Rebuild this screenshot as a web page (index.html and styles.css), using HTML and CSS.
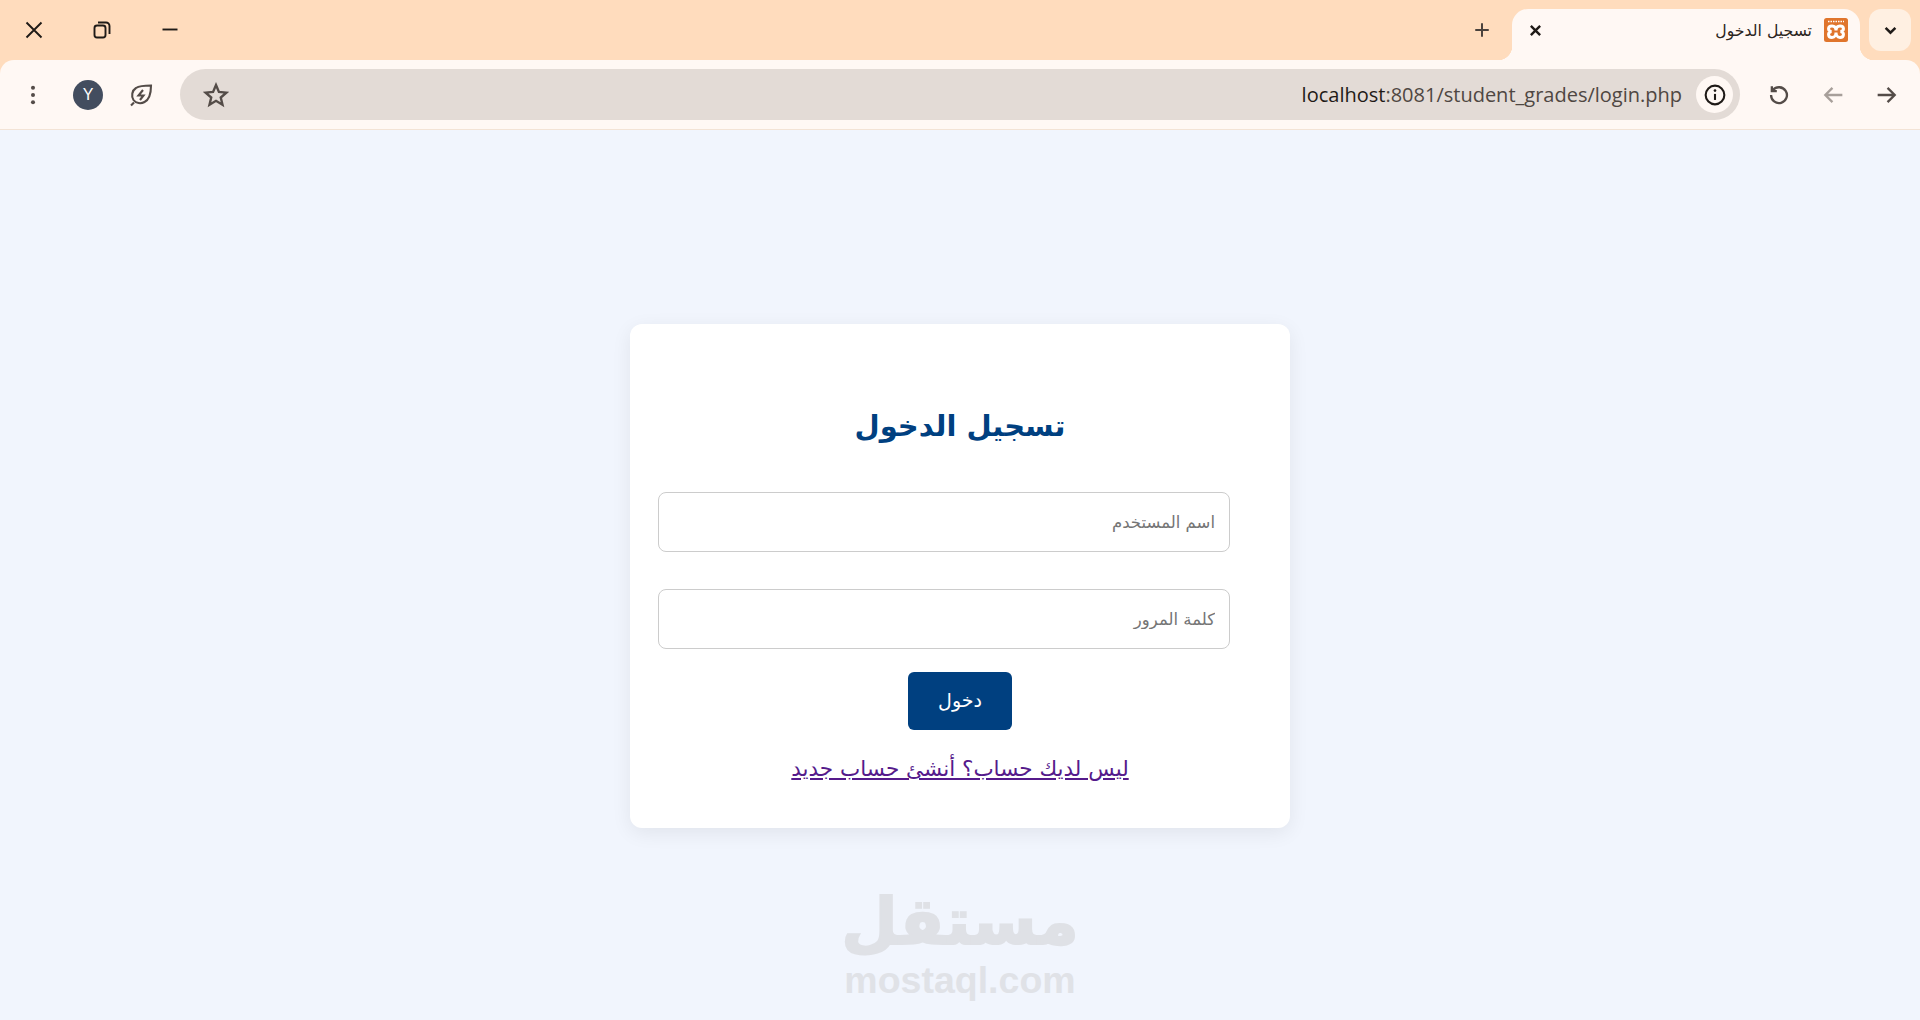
FILE: index.html
```html
<!DOCTYPE html>
<html lang="ar">
<head>
    <meta charset="UTF-8">
    <title>تسجيل الدخول</title>
    <link rel="stylesheet" href="styles.css">
</head>
<body>
    <header class="browser">
        <div class="tabstrip">
            <div class="window-btns">
                <svg class="win-icon" viewBox="0 0 20 20"><path d="M2.500 2.500l15 15M17.500 2.500l-15 15"/></svg>
                <svg class="win-icon" viewBox="0 0 20 20"><rect x="2.500" y="5.500" width="11" height="12" rx="2.500"/><path d="M6 2.500h8a3.500 3.500 0 0 1 3.500 3.500v8"/></svg>
                <svg class="win-icon" viewBox="0 0 20 20"><path d="M2.500 9.500h15"/></svg>
            </div>
            <svg class="new-tab" viewBox="0 0 20 20"><path d="M10 2.500v15M2.500 10h15"/></svg>
            <div class="tab">
                <svg class="tab-close" viewBox="0 0 14 14"><path d="M2 2l10 10M12 2L2 12"/></svg>
                <span class="tab-title">تسجيل الدخول</span>
                <svg class="favicon" viewBox="0 0 24 24">
                    <rect width="24" height="24" rx="2.500" fill="#e0752c"/>
                    <path d="M4 3.500h16" fill="none" stroke="#fff" stroke-width="1.500" stroke-dasharray="1.500 1"/>
                    <path d="M8 8c-4.500 0-4.500 5-.5 5.500c-4 .5-4 6 .5 6c3 0 4-3 4-5c0 2 1 5 4 5c4.500 0 4.500-5.500 .5-6c4-.5 4-5.500-.5-5.500c-3 0-4 2-4 4.500c0-2.500-1-4.500-4-4.500z" fill="none" stroke="#fff" stroke-width="3"/>
                </svg>
            </div>
            <div class="tab-search">
                <svg viewBox="0 0 12 12"><path d="M1.500 3.500L6 8l4.500-4.500"/></svg>
            </div>
        </div>
        <div class="toolbar">
            <svg class="menu-dots" viewBox="0 0 6 24"><circle cx="3" cy="4" r="2.200"/><circle cx="3" cy="12" r="2.200"/><circle cx="3" cy="20" r="2.200"/></svg>
            <div class="avatar">Y</div>
            <svg class="leaf" viewBox="0 0 24 24"><path d="M22 2.500c-7.500 0-12 .5-15 2.500C3 7.500 2 13 4.500 17c2.500 3.500 7.500 4 11 2C20.500 16.500 22 10.500 22 2.500z"/><path d="M2 22.500l3-3"/><path d="M14 7l-4.500 5.500h5L11 17"/></svg>
            <div class="omnibox">
                <svg class="star" viewBox="0 0 24 24"><path d="M12 2.800l2.700 6.400 6.900.6-5.200 4.500 1.600 6.700L12 17.400 6 21l1.600-6.700-5.200-4.500 6.900-.6z"/></svg>
                <div class="url"><span class="host">localhost</span>:8081/student_grades/login.php</div>
                <div class="site-info">
                    <svg viewBox="0 0 20 20"><circle cx="10" cy="10" r="8.500"/><path d="M10 9v5.500"/><circle class="dot" cx="10" cy="6" r="1.200"/></svg>
                </div>
            </div>
            <div class="nav-btns">
                <svg class="nav-icon" viewBox="0 0 20 20"><path d="M4.500 5.500A7.200 7.200 0 1 1 2.800 10"/><path d="M3.500 2v4.500H8"/></svg>
                <svg class="nav-icon faded" viewBox="0 0 20 20"><path d="M18.500 10H2.500M9.500 3.500L3 10l6.500 6.500"/></svg>
                <svg class="nav-icon" viewBox="0 0 20 20"><path d="M1.500 10h16M10.500 3.500L17 10l-6.500 6.500"/></svg>
            </div>
        </div>
    </header>

    <main class="page">
        <section class="login-card">
            <h2 class="login-title">تسجيل الدخول</h2>
            <form class="login-form">
                <input class="field" type="text" dir="rtl" placeholder="اسم المستخدم">
                <input class="field" type="password" dir="rtl" placeholder="كلمة المرور">
                <button class="submit" type="button">دخول</button>
            </form>
            <a class="register-link" href="#">ليس لديك حساب؟ أنشئ حساب جديد</a>
        </section>
        <div class="watermark">
            <div class="wm-arabic">مستقل</div>
            <div class="wm-latin">mostaql.com</div>
        </div>
    </main>
</body>
</html>
```

FILE: styles.css
```css
* {
    box-sizing: border-box;
}

html, body {
    height: 100%;
}

body {
    margin: 0;
    display: flex;
    flex-direction: column;
    font-family: "DejaVu Sans", sans-serif;
    background-color: #f1f5fd;
    overflow: hidden;
}

.browser {
    flex: none;
    background-color: #ffdcbd;
}

.tabstrip {
    height: 60px;
    display: flex;
    align-items: flex-end;
    padding-left: 24px;
}

.window-btns {
    display: flex;
    gap: 48px;
    height: 60px;
    align-items: center;
    margin-right: auto;
}

.win-icon {
    width: 20px;
    height: 20px;
    fill: none;
    stroke: #1f1a17;
    stroke-width: 1.900;
}

.new-tab {
    width: 18px;
    height: 18px;
    margin: 0 21px 21px 0;
    fill: none;
    stroke: #4a423d;
    stroke-width: 2.200;
}

.tab {
    position: relative;
    width: 348px;
    height: 51px;
    display: flex;
    align-items: center;
    background-color: #fff8f4;
    border-radius: 16px 16px 0 0;
    padding: 0 12px 9px 17px;
}

/* curved feet of the active tab */
.tab::before,
.tab::after {
    content: "";
    position: absolute;
    bottom: 0;
    width: 14px;
    height: 14px;
}

.tab::before {
    left: -14px;
    background: radial-gradient(circle at 0 0, transparent 14px, #fff8f4 14.500px);
}

.tab::after {
    right: -14px;
    background: radial-gradient(circle at 100% 0, transparent 14px, #fff8f4 14.500px);
}

.tab-close {
    width: 13px;
    height: 13px;
    fill: none;
    stroke: #1f1a17;
    stroke-width: 2.600;
}

.tab-title {
    margin-left: auto;
    margin-right: 12px;
    font-size: 15.700px;
    color: #2b2420;
}

.favicon {
    width: 24px;
    height: 24px;
}

.tab-search {
    width: 42px;
    height: 42px;
    margin: 0 9px 9px 9px;
    display: flex;
    align-items: center;
    justify-content: center;
    background-color: #fff0e2;
    border-radius: 12px;
}

.tab-search svg {
    width: 13px;
    height: 13px;
    fill: none;
    stroke: #1f1a17;
    stroke-width: 2.300;
}

.toolbar {
    height: 70px;
    display: flex;
    align-items: center;
    background-color: #fff8f4;
    border-bottom: 1px solid #f3e3d5;
    border-radius: 14px 14px 0 0;
    padding: 0 22px 0 30px;
}

.menu-dots {
    width: 6px;
    height: 22px;
    fill: #544c48;
}

.avatar {
    width: 30px;
    height: 30px;
    margin-left: 37px;
    display: flex;
    align-items: center;
    justify-content: center;
    border-radius: 50%;
    background-color: #434d5f;
    color: #fff;
    font-family: "Liberation Sans", sans-serif;
    font-size: 16px;
}

.leaf {
    width: 24px;
    height: 24px;
    margin-left: 26px;
    fill: none;
    stroke: #544c48;
    stroke-width: 2.100;
}

.omnibox {
    width: 1560px;
    height: 51px;
    margin-left: 27px;
    display: flex;
    align-items: center;
    background-color: #e3dbd6;
    border-radius: 26px;
    padding: 0 7px 0 23px;
}

.star {
    width: 26px;
    height: 26px;
    fill: none;
    stroke: #544c48;
    stroke-width: 2.200;
}

.url {
    margin-left: auto;
    margin-right: 14px;
    font-family: "Open Sans", sans-serif;
    font-size: 20px;
    color: #4f4742;
}

.host {
    color: #1f1a17;
}

.site-info {
    width: 37px;
    height: 37px;
    display: flex;
    align-items: center;
    justify-content: center;
    border-radius: 50%;
    background-color: #fff8f4;
}

.site-info svg {
    width: 22px;
    height: 22px;
    fill: none;
    stroke: #1f1a17;
    stroke-width: 1.900;
}

.site-info .dot {
    fill: #1f1a17;
    stroke: none;
}

.nav-btns {
    display: flex;
    gap: 32px;
    margin-left: auto;
}

.nav-icon {
    width: 22px;
    height: 22px;
    fill: none;
    stroke: #544c48;
    stroke-width: 2.100;
}

.nav-icon.faded {
    stroke: #a79f9a;
}

.page {
    flex: 1;
    display: flex;
    flex-direction: column;
    align-items: center;
    padding-top: 194px;
}

.login-card {
    width: 660px;
    height: 504px;
    background-color: #fff;
    border-radius: 12px;
    box-shadow: 0 5px 20px rgba(0, 0, 0, 0.07);
    text-align: center;
    padding-top: 77px;
}

.login-title {
    margin: 0 0 41px;
    font-size: 29px;
    line-height: 50px;
    color: #004080;
}

.login-form {
    display: flex;
    flex-direction: column;
    align-items: center;
}

.field {
    width: 572px;
    height: 60px;
    margin: 0 32px 37px 0;
    border: 1px solid #cccccc;
    border-radius: 8px;
    padding: 0 14px;
    font-family: inherit;
    font-size: 16.500px;
}

.field::placeholder {
    color: #757575;
}

.field:nth-child(2) {
    margin-bottom: 23px;
}

.submit {
    width: 104px;
    height: 58px;
    border: none;
    border-radius: 6px;
    padding-bottom: 4px;
    background-color: #004080;
    color: #fff;
    font-family: inherit;
    font-size: 19px;
}

.register-link {
    display: inline-block;
    margin-top: 26px;
    font-size: 21.500px;
    color: #551a8b;
}

.watermark {
    margin-top: 56px;
    text-align: center;
    color: #dfe1e6;
    font-family: "Liberation Sans", sans-serif;
    font-weight: bold;
}

.wm-arabic {
    font-family: "DejaVu Sans", sans-serif;
    font-size: 65px;
    line-height: 76px;
    -webkit-text-stroke: 2px #dfe1e6;
}

.wm-latin {
    margin-top: -2px;
    font-size: 37.500px;
    line-height: 44px;
    color: #e0e2e7;
}
```
